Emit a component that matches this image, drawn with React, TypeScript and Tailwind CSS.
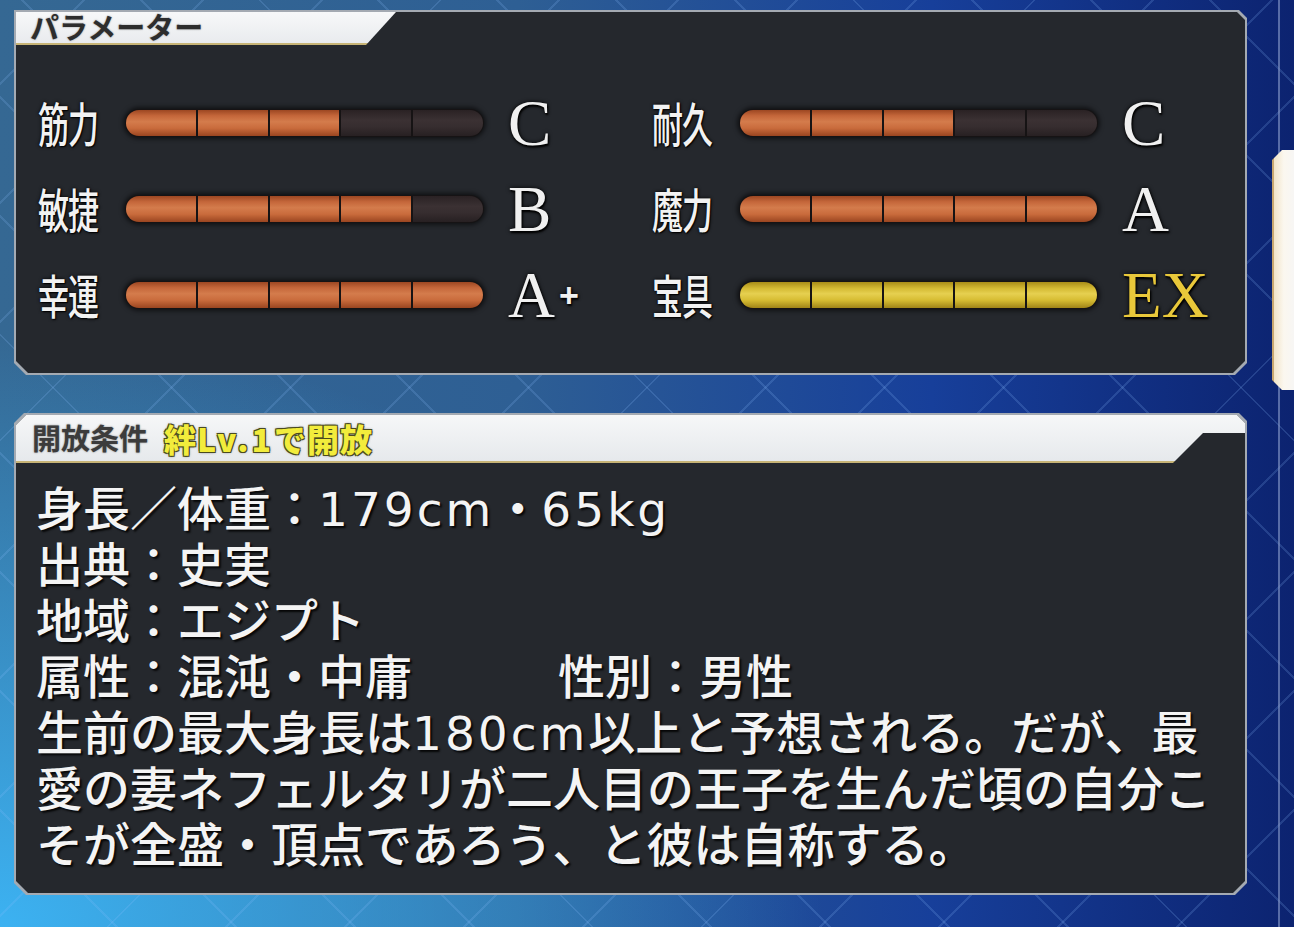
import clsx from "clsx";

const orangeSeg =
  "bg-[linear-gradient(180deg,#9c4722_0%,#c4663a_22%,#d47c4c_45%,#c96b3c_70%,#9a4520_100%)]";
const goldSeg =
  "bg-[linear-gradient(180deg,#a88c18_0%,#d4ba34_25%,#e6d050_45%,#d6bc32_70%,#a08418_100%)]";
const emptySeg =
  "bg-[linear-gradient(180deg,#2a2224_0%,#3b3133_40%,#362d2f_65%,#272022_100%)]";

type Stat = { label: string; filled: number; grade: string; plus?: boolean; gold?: boolean };

const leftStats: Stat[] = [
  { label: "筋力", filled: 3, grade: "C" },
  { label: "敏捷", filled: 4, grade: "B" },
  { label: "幸運", filled: 5, grade: "A", plus: true },
];

const rightStats: Stat[] = [
  { label: "耐久", filled: 3, grade: "C" },
  { label: "魔力", filled: 5, grade: "A" },
  { label: "宝具", filled: 5, grade: "EX", gold: true },
];

function Bar({ filled, gold }: { filled: number; gold?: boolean }) {
  return (
    <div className="flex h-[28px] w-[359px] gap-[2px] overflow-hidden rounded-full bg-[#161314] p-[1px] shadow-[0_0_4px_2px_rgba(0,0,0,0.55)]">
      {[0, 1, 2, 3, 4].map((i) => (
        <div
          key={i}
          className={clsx(
            "flex-1",
            i === 0 && "rounded-l-full",
            i === 4 && "rounded-r-full",
            i < filled ? (gold ? goldSeg : orangeSeg) : emptySeg
          )}
        />
      ))}
    </div>
  );
}

function StatRow({ stat }: { stat: Stat }) {
  return (
    <div className="flex h-[86px] items-center">
      <div className="w-[87px]">
        <span className="inline-block origin-center scale-y-150 font-['Noto_Sans_CJK_JP',sans-serif] text-[31px] font-medium leading-none tracking-[-1px] text-[#f2f2f2] [text-shadow:1px_1px_1px_#000,0_0_3px_#000]">
          {stat.label}
        </span>
      </div>
      <Bar filled={stat.filled} gold={stat.gold} />
      <div
        className={clsx(
          "ml-[24px] flex items-center font-['Liberation_Serif',serif] text-[65px] leading-none [text-shadow:1px_2px_2px_#000,0_0_4px_#000]",
          stat.gold ? "text-[#e9c83a]" : "text-[#f0f0f0]"
        )}
      >
        <span>{stat.grade}</span>
        {stat.plus && (
          <span className="ml-[4px] font-['Liberation_Sans',sans-serif] text-[34px] font-bold">+</span>
        )}
      </div>
    </div>
  );
}

const outerClip1 =
  "[clip-path:polygon(0_0,calc(100%_-_8px)_0,100%_8px,100%_calc(100%_-_12px),calc(100%_-_12px)_100%,12px_100%,0_calc(100%_-_12px))]";
const outerClip2 =
  "[clip-path:polygon(10px_0,calc(100%_-_8px)_0,100%_8px,100%_calc(100%_-_12px),calc(100%_-_12px)_100%,12px_100%,0_calc(100%_-_12px),0_10px)]";

function ParameterPanel() {
  return (
    <div className={clsx("h-[365px] w-[1233px] bg-[#a4aab2] p-[2px]", outerClip1)}>
      <div className={clsx("flex h-full flex-col bg-[#25282d]", outerClip1)}>
        <div className="h-[33px] w-[380px] overflow-hidden border-b-2 border-[#c7b476] bg-[linear-gradient(180deg,#f7f8f9_0%,#e9ebee_100%)] [clip-path:polygon(0_0,100%_0,calc(100%_-_30px)_100%,0_100%)]">
          <div className="-mt-[4px] pl-[14px] font-['Noto_Sans_CJK_JP',sans-serif] text-[29px] font-bold leading-[36px] text-[#2d2d2d] [text-shadow:0_0_2px_rgba(0,0,0,0.4)]">
            パラメーター
          </div>
        </div>
        <div className="grid grid-cols-[614px_1fr] pl-[22px] pt-[35px]">
          <div>
            {leftStats.map((s) => (
              <StatRow key={s.label} stat={s} />
            ))}
          </div>
          <div>
            {rightStats.map((s) => (
              <StatRow key={s.label} stat={s} />
            ))}
          </div>
        </div>
      </div>
    </div>
  );
}

// half-width runs in the game font are wider than Noto's proportional latin
function W({ children }: { children: string }) {
  return <span className="font-['DejaVu_Sans',sans-serif] tracking-[3px]">{children}</span>;
}

function Line({ children }: { children: React.ReactNode }) {
  return <div className="h-[56px]">{children}</div>;
}

function ProfilePanel() {
  return (
    <div className={clsx("h-[482px] w-[1233px] bg-[#a4aab2] p-[2px]", outerClip2)}>
      <div className={clsx("flex h-full flex-col bg-[#25282d]", outerClip2)}>
        <div className="flex h-[48px] items-center border-b-2 border-[#c7b476] bg-[linear-gradient(180deg,#f6f7f8_0%,#e6e9ec_100%)] pl-[16px] [clip-path:polygon(0_0,100%_0,100%_18px,calc(100%_-_42px)_18px,calc(100%_-_72px)_100%,0_100%)]">
          <span className="font-['Noto_Sans_CJK_JP',sans-serif] text-[29px] font-bold text-[#3c3c3c] [text-shadow:0_0_2px_rgba(0,0,0,0.45)]">
            開放条件
          </span>
          <span className="ml-[16px] font-['Noto_Sans_CJK_JP',sans-serif] text-[32px] font-black tracking-[1px] text-[#f2ec3c] [text-shadow:-1px_-1px_0_#4a4a20,1px_-1px_0_#4a4a20,-1px_1px_0_#4a4a20,1px_1px_0_#4a4a20,0_0_3px_#333]">
            絆<span className="tracking-[3px]">Lv.1</span>で開放
          </span>
        </div>
        <div className="whitespace-nowrap pl-[20px] pt-[15px] font-['Noto_Sans_CJK_JP',sans-serif] text-[47px] font-medium leading-[56px] text-[#f4f4f4] [text-shadow:2px_2px_2px_rgba(0,0,0,0.85)]">
          <Line>
            身長／体重：<W>179cm</W>・<W>65kg</W>
          </Line>
          <Line>出典：史実</Line>
          <Line>地域：エジプト</Line>
          <Line>
            <span className="inline-block w-[522px]">属性：混沌・中庸</span>
            <span>性別：男性</span>
          </Line>
          <Line>
            生前の最大身長は<W>180cm</W>以上と予想される。だが、最
          </Line>
          <Line>愛の妻ネフェルタリが二人目の王子を生んだ頃の自分こ</Line>
          <Line>そが全盛・頂点であろう、と彼は自称する。</Line>
        </div>
      </div>
    </div>
  );
}

export default function App() {
  return (
    <div className="flex h-[927px] w-[1294px] overflow-hidden [background-image:repeating-linear-gradient(45deg,transparent_0_82px,rgba(140,190,255,0.18)_82px_84px),repeating-linear-gradient(-45deg,transparent_0_82px,rgba(140,190,255,0.18)_82px_84px),radial-gradient(ellipse_at_0%_100%,#3cb2f2_0%,rgba(60,178,242,0)_45%),linear-gradient(90deg,#356893_0%,#2e5f94_40%,#173f9a_72%,#0c2370_100%)]">
      <div className="flex w-[1247px] shrink-0 flex-col gap-[38px] pl-[14px] pt-[10px]">
        <ParameterPanel />
        <ProfilePanel />
      </div>
      <div className="relative flex-1">
        <div className="ml-[31px] h-full w-[2px] bg-[#8a9ccc]/60" />
        <div className="absolute left-[25px] top-[150px] h-[240px] w-[30px] border-l-2 border-[#c9a870] bg-[linear-gradient(90deg,#f1e4c8_0%,#fbf7ef_35%,#f4f5f8_100%)] [clip-path:polygon(10px_0,100%_0,100%_100%,10px_100%,0_calc(100%_-_10px),0_10px)]" />
      </div>
    </div>
  );
}
